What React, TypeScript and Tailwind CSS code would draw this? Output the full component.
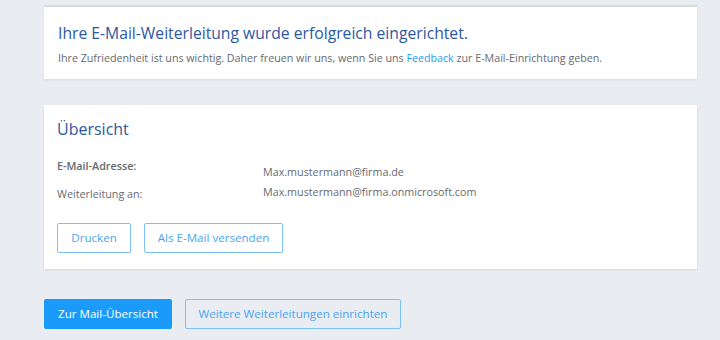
const font = { fontFamily: '"Open Sans", "Noto Sans", sans-serif' };

export default function App() {
  return (
    <div
      className="w-[720px] h-[340px] overflow-hidden bg-[#e9ecf0] pl-[44px] pr-[23px] pt-[5px]"
      style={font}
    >
      {/* Erfolgsmeldung */}
      <div className="bg-white border-t-2 border-[#d8dbe0] shadow-[0_1px_2px_rgba(0,0,0,0.08)] h-[74px] px-[14px] pt-[14px]">
        <h1 className="text-[15.7px] leading-[24px] text-[#2c58a0]">
          Ihre E-Mail-Weiterleitung wurde erfolgreich eingerichtet.
        </h1>
        <p className="mt-[5px] text-[10.7px] leading-[16px] text-[#666a70]">
          Ihre Zufriedenheit ist uns wichtig. Daher freuen wir uns, wenn Sie uns{" "}
          <span className="text-[#2a9bf5]">Feedback</span> zur E-Mail-Einrichtung geben.
        </p>
      </div>

      {/* Übersicht */}
      <div className="mt-[26px] bg-white shadow-[0_1px_2px_rgba(0,0,0,0.1)] h-[164px] px-[13px] pt-[12px]">
        <h2 className="text-[16px] leading-[24px] text-[#2c58a0]">Übersicht</h2>
        <div className="mt-[17px] grid grid-cols-[206px_1fr] text-[10.75px] text-[#666a70]">
          <div className="font-semibold leading-[16px]">E-Mail-Adresse:</div>
          <div className="leading-[16px] mt-[6px]">Max.mustermann@firma.de</div>
          <div className="leading-[16px] mt-[6px]">Weiterleitung an:</div>
          <div className="leading-[16px] mt-[4px]">Max.mustermann@firma.onmicrosoft.com</div>
        </div>
        <div className="mt-[21px] flex gap-[13px]">
          <button className="h-[30px] w-[74px] rounded-[2px] border border-[#7cc0fb] text-[11.6px] text-[#4ba4f3]">
            Drucken
          </button>
          <button className="h-[30px] w-[139px] rounded-[2px] border border-[#7cc0fb] text-[11.6px] text-[#4ba4f3]">
            Als E-Mail versenden
          </button>
        </div>
      </div>

      {/* Aktionen */}
      <div className="mt-[30px] flex gap-[13px]">
        <button className="h-[30px] w-[128px] rounded-[2px] bg-[#1a9bfb] text-[11.6px] text-white">
          Zur Mail-Übersicht
        </button>
        <button className="h-[30px] w-[216px] rounded-[2px] border border-[#7cc0fb] text-[11.6px] text-[#4ba4f3]">
          Weitere Weiterleitungen einrichten
        </button>
      </div>
    </div>
  );
}
